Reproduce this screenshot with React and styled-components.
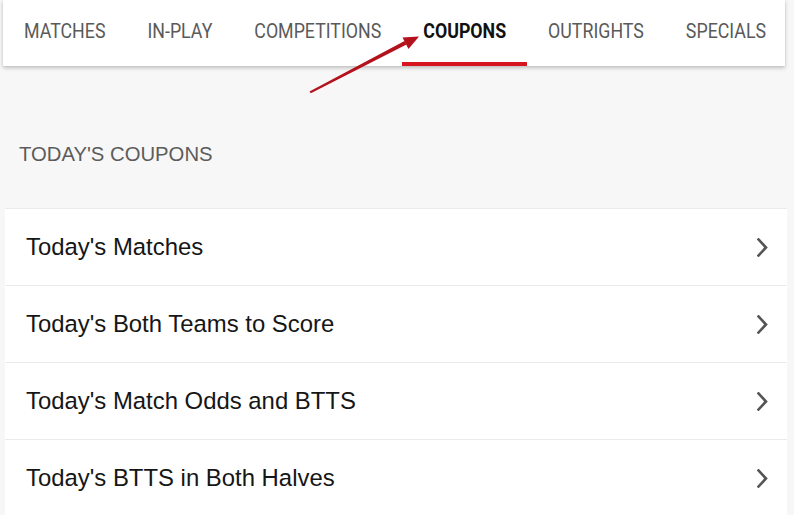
import React from "react";
import styled, { createGlobalStyle } from "styled-components";

const Global = createGlobalStyle`
  html, body { margin: 0; padding: 0; background: #f7f7f7; }
  body { font-family: "Liberation Sans", Arial, sans-serif; }
`;

const Page = styled.div`
  position: relative;
  width: 794px;
  height: 515px;
  overflow: hidden;
  background: #f7f7f7;
`;

const TabBar = styled.nav`
  display: flex;
  align-items: stretch;
  margin-left: 3px;
  width: 782px;
  height: 66px;
  background: #ffffff;
  box-shadow: 0 2px 4px rgba(0, 0, 0, 0.22), 0 0 2px rgba(0, 0, 0, 0.08);
`;

const Tab = styled.div`
  position: relative;
  display: flex;
  align-items: center;
  padding: 0 21px 2px;
  font-family: Roboto, "Liberation Sans", sans-serif;
  font-size: 17.8px;
  font-weight: ${(p) => (p.$active ? 700 : 400)};
  color: ${(p) => (p.$active ? "#111111" : "#5a5a5a")};
  text-transform: uppercase;
  white-space: nowrap;
  border-bottom: 4px solid ${(p) => (p.$active ? "#d8141e" : "transparent")};
  box-sizing: border-box;
`;

const Label = styled.span`
  display: inline-block;
  transform: scaleY(1.14);
`;

const Section = styled.section`
  padding-top: 77px;
`;

const SectionTitle = styled.h2`
  margin: 0 0 42px 19px;
  font-family: "Liberation Sans", Arial, sans-serif;
  font-weight: 400;
  font-size: 20.3px;
  line-height: 23px;
  color: #5c5c5c;
`;

const List = styled.ul`
  list-style: none;
  margin: 0 0 0 5px;
  padding: 0;
  width: 782px;
  background: #ffffff;
`;

const Row = styled.li`
  display: flex;
  align-items: center;
  justify-content: space-between;
  height: 77px;
  box-sizing: border-box;
  padding: 0 19px 0 21px;
  border-top: 1px solid #ebebeb;
  font-family: "Liberation Sans", Arial, sans-serif;
  font-size: 23.9px;
  color: #161616;
`;

const Chevron = () => (
  <svg width="11" height="19" viewBox="0 0 11 19" fill="none">
    <path d="M1.5 1.5 L9 9.5 L1.5 17.5" stroke="#555555" strokeWidth="2.6" strokeLinecap="square" strokeLinejoin="miter" />
  </svg>
);

const ArrowLayer = styled.svg`
  position: absolute;
  left: 0;
  top: 0;
  pointer-events: none;
`;

const tabs = ["Matches", "In-Play", "Competitions", "Coupons", "Outrights", "Specials"];
const coupons = [
  "Today's Matches",
  "Today's Both Teams to Score",
  "Today's Match Odds and BTTS",
  "Today's BTTS in Both Halves",
];

export default function App() {
  return (
    <Page>
      <Global />
      <TabBar>
        {tabs.map((t) => (
          <Tab key={t} $active={t === "Coupons"}>
            <Label>{t}</Label>
          </Tab>
        ))}
      </TabBar>
      <Section>
        <SectionTitle>TODAY'S COUPONS</SectionTitle>
        <List>
          {coupons.map((c) => (
            <Row key={c}>
              <span>{c}</span>
              <Chevron />
            </Row>
          ))}
        </List>
      </Section>
      <ArrowLayer width="794" height="515" viewBox="0 0 794 515">
        <polygon points="309.5,91.5 310.8,93.2 406.5,44.5 404.5,41" fill="#b3111c" />
        <polygon points="419,36.5 402.5,37.5 408.5,49" fill="#b3111c" />
      </ArrowLayer>
    </Page>
  );
}
